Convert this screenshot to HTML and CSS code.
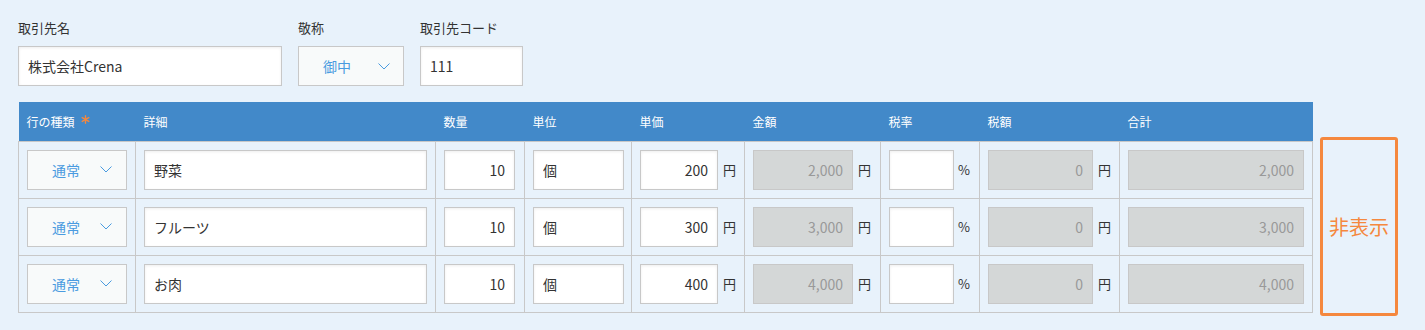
FILE: index.html
```html
<!DOCTYPE html>
<html lang="ja">

<head>
    <meta charset="UTF-8">
    <meta name="viewport" content="width=device-width, initial-scale=1.0">
    <title>請求明細</title>
    <link rel="stylesheet" href="styles.css">
</head>

<body>
    <div class="page">
        <div class="fields">
            <div class="field">
                <label class="field-label">取引先名</label>
                <input class="text-input name-input" type="text" value="株式会社Crena">
            </div>
            <div class="field">
                <label class="field-label">敬称</label>
                <div class="select honor-select">
                    <span>御中</span>
                    <svg class="chevron" width="12" height="7" viewBox="0 0 12 7"><polyline points="0.5,0.5 6,6 11.5,0.5" fill="none" stroke="#4a9be0" stroke-width="1"/></svg>
                </div>
            </div>
            <div class="field">
                <label class="field-label">取引先コード</label>
                <input class="text-input code-input" type="text" value="111">
            </div>
        </div>

        <div class="detail-area">
            <table class="detail-table">
                <colgroup>
                    <col style="width: 117px">
                    <col style="width: 300px">
                    <col style="width: 89px">
                    <col style="width: 107px">
                    <col style="width: 113px">
                    <col style="width: 136px">
                    <col style="width: 99px">
                    <col style="width: 140px">
                    <col style="width: 193px">
                </colgroup>
                <thead>
                    <tr>
                        <th>行の種類<svg class="required" width="9" height="9" viewBox="0 0 9 9"><g stroke="#f5883e" stroke-width="1.4" stroke-linecap="round"><line x1="4.5" y1="0.7" x2="4.5" y2="8.3"/><line x1="1.2" y1="2.6" x2="7.8" y2="6.4"/><line x1="1.2" y1="6.4" x2="7.8" y2="2.6"/></g></svg></th>
                        <th>詳細</th>
                        <th>数量</th>
                        <th>単位</th>
                        <th>単価</th>
                        <th>金額</th>
                        <th>税率</th>
                        <th>税額</th>
                        <th>合計</th>
                    </tr>
                </thead>
                <tbody id="rows">
                </tbody>
            </table>
            <div class="hide-box">非表示</div>
        </div>
    </div>

    <script>
        const rows = [
            { name: '野菜', qty: 10, unit: '個', price: 200 },
            { name: 'フルーツ', qty: 10, unit: '個', price: 300 },
            { name: 'お肉', qty: 10, unit: '個', price: 400 }
        ];
        const tbody = document.getElementById('rows');
        const chevron = '<svg class="chevron" width="12" height="7" viewBox="0 0 12 7"><polyline points="0.5,0.5 6,6 11.5,0.5" fill="none" stroke="#4a9be0" stroke-width="1"/></svg>';
        rows.forEach((r) => {
            const amount = (r.qty * r.price).toLocaleString('en-US');
            const tr = document.createElement('tr');
            tr.innerHTML =
                '<td><div class="select kind-select"><span>通常</span>' + chevron + '</div></td>' +
                '<td><input class="text-input w-detail" type="text" value="' + r.name + '"></td>' +
                '<td><input class="text-input num w-qty" type="text" value="' + r.qty + '"></td>' +
                '<td><input class="text-input w-unit" type="text" value="' + r.unit + '"></td>' +
                '<td><div class="with-unit"><input class="text-input num w-price" type="text" value="' + r.price + '"><span class="unit">円</span></div></td>' +
                '<td><div class="with-unit"><input class="text-input num w-amount" type="text" value="' + amount + '" disabled><span class="unit">円</span></div></td>' +
                '<td><div class="with-unit"><input class="text-input num w-rate" type="text" value=""><span class="unit pct">%</span></div></td>' +
                '<td><div class="with-unit"><input class="text-input num w-tax" type="text" value="0" disabled><span class="unit">円</span></div></td>' +
                '<td><input class="text-input num w-total" type="text" value="' + amount + '" disabled></td>';
            tbody.appendChild(tr);
        });
    </script>
</body>

</html>
```

FILE: styles.css
```css
* {
    box-sizing: border-box;
}

body {
    margin: 0;
    background-color: #e8f2fb;
    font-family: "Noto Sans CJK JP", "Noto Sans", sans-serif;
    color: #333;
}

.page {
    padding: 18px 18px 0 18px;
}

.fields {
    display: flex;
    gap: 16px;
}

.field {
    display: flex;
    flex-direction: column;
}

.field-label {
    font-size: 13px;
    line-height: 20px;
    margin-bottom: 8px;
    color: #333;
}

.text-input {
    height: 40px;
    border: 1px solid #c8c8c8;
    background-color: #fff;
    box-shadow: inset 0 1px 3px rgba(0, 0, 0, 0.07);
    font-family: "Noto Sans CJK JP", "Noto Sans", sans-serif;
    font-size: 14px;
    color: #333;
    padding: 0 9px;
    margin: 0;
    outline: none;
    display: block;
}

.text-input.num {
    text-align: right;
}

.text-input:disabled {
    background-color: #d4d7d7;
    color: #999;
    box-shadow: none;
}

.name-input {
    width: 264px;
}

.code-input {
    width: 103px;
}

.select {
    height: 40px;
    border: 1px solid #c8c8c8;
    background-color: #f8fafa;
    display: flex;
    align-items: center;
    justify-content: space-between;
    padding: 0 13px 0 24px;
    font-size: 14px;
    color: #4a9be0;
}

.honor-select {
    width: 106px;
}

.kind-select {
    width: 100px;
    padding-right: 14px;
}

.chevron {
    display: block;
}

.detail-area {
    display: flex;
    align-items: flex-start;
    gap: 7px;
    margin-top: 16px;
}

.detail-table {
    border-collapse: collapse;
    table-layout: fixed;
    width: 1294px;
}

.detail-table th {
    background-color: #4289c9;
    color: #fff;
    font-size: 12px;
    font-weight: 400;
    text-align: left;
    height: 39px;
    padding: 0 8px;
    border: none;
}

.required {
    margin-left: 6px;
    vertical-align: 3px;
}

.detail-table td {
    border: 1px solid #c8c8c8;
    padding: 8px 8px;
    height: 57px;
}

.with-unit {
    display: flex;
    align-items: center;
}

.unit {
    font-size: 13px;
    margin-left: 5px;
    color: #333;
}

.unit.pct {
    margin-left: 4px;
}

.w-detail { width: 283px; }
.w-qty { width: 71px; }
.w-unit { width: 91px; }
.w-price { width: 78px; }
.w-amount { width: 100px; }
.w-rate { width: 65px; }
.w-tax { width: 105px; }
.w-total { width: 176px; }

.hide-box {
    margin-top: 35px;
    width: 78px;
    height: 179px;
    border: 3px solid #f5883e;
    border-radius: 3px;
    display: flex;
    justify-content: center;
    align-items: center;
    color: #f5883e;
    font-size: 20px;
}
```
